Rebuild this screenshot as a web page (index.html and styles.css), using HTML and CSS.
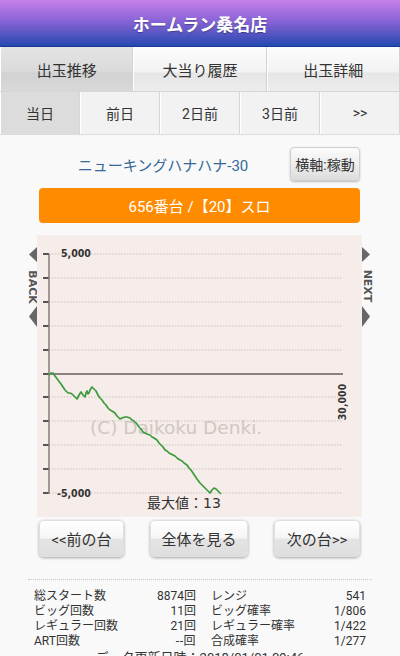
FILE: index.html
```html
<!DOCTYPE html>
<html lang="ja">
<head>
<meta charset="utf-8">
<title>ホームラン桑名店</title>
<link rel="stylesheet" href="styles.css">
</head>
<body>
<header class="hdr">ホームラン桑名店</header>
<nav class="tabs">
  <div class="tab active">出玉推移</div>
  <div class="tab">大当り履歴</div>
  <div class="tab">出玉詳細</div>
</nav>
<nav class="days">
  <div class="day active">当日</div>
  <div class="day">前日</div>
  <div class="day">2日前</div>
  <div class="day">3日前</div>
  <div class="day">&gt;&gt;</div>
</nav>
<div class="title-row">
  <span class="name">ニューキングハナハナ-30</span>
  <button class="axis-btn">横軸:稼動</button>
</div>
<div class="unit-bar">656番台 /【20】スロ</div>
<div class="chart-row">
  <div class="side">
    <svg width="12" height="100" viewBox="0 0 12 100" overflow="visible">
      <polygon points="4,19.5 12,12 12,27" fill="#666"/>
      <polygon points="4,81.5 12,71 12,92" fill="#666"/>
      <text x="7" y="52" class="side-txt" transform="rotate(90 7 52)">BACK</text>
    </svg>
  </div>
  <div class="chart">
    <svg width="325" height="282" viewBox="0 0 325 282">
      <g class="grid">
        <line x1="12" y1="19" x2="306" y2="19"/>
        <line x1="12" y1="43" x2="306" y2="43"/>
        <line x1="12" y1="67" x2="306" y2="67"/>
        <line x1="12" y1="91" x2="306" y2="91"/>
        <line x1="12" y1="115" x2="306" y2="115"/>
        <line x1="12" y1="162" x2="306" y2="162"/>
        <line x1="12" y1="186" x2="306" y2="186"/>
        <line x1="12" y1="210" x2="306" y2="210"/>
        <line x1="12" y1="234" x2="306" y2="234"/>
        <line x1="12" y1="258" x2="306" y2="258"/>
      </g>
      <g class="ticks">
        <line x1="6" y1="19" x2="12" y2="19"/>
        <line x1="6" y1="43" x2="12" y2="43"/>
        <line x1="6" y1="67" x2="12" y2="67"/>
        <line x1="6" y1="91" x2="12" y2="91"/>
        <line x1="6" y1="115" x2="12" y2="115"/>
        <line x1="6" y1="139" x2="12" y2="139"/>
        <line x1="6" y1="162" x2="12" y2="162"/>
        <line x1="6" y1="186" x2="12" y2="186"/>
        <line x1="6" y1="210" x2="12" y2="210"/>
        <line x1="6" y1="234" x2="12" y2="234"/>
        <line x1="6" y1="258" x2="12" y2="258"/>
      </g>
      <line class="axis" x1="12" y1="19" x2="12" y2="259"/>
      <line class="zero" x1="12" y1="139" x2="306" y2="139"/>
      <text class="wm" x="53" y="199">(C) Daikoku Denki.</text>
      <text class="ylab" x="24" y="22">5,000</text>
      <text class="ylab" x="20" y="262">-5,000</text>
      <text class="ylab" x="309" y="167" text-anchor="middle" transform="rotate(-90 309 167)">30,000</text>
      <polyline class="data" points="12,140 14,138 16,138 18,141 21,145 24,149 26,152 28,155 31,158 33,158 35,159 37,161 40,164 42,160 44,157 46,160 48,162 49,158 50,156 51,159 52,158 53,155 55,152 57,154 59,156 61,160 63,163 65,165 67,168 69,170 71,173 73,175 75,176 78,178 80,181 83,184 85,183 88,182 90,182 93,183 95,185 97,186 100,189 102,192 104,194 106,197 108,198 110,199 113,200 115,202 117,203 120,205 122,208 124,210 126,212 128,215 130,216 132,218 134,219 136,220 138,221 140,223 143,225 145,226 147,228 150,230 152,233 154,235 156,238 158,241 160,244 163,248 165,250 167,252 169,254 171,256 173,258 175,255 177,253 179,254 180,255 182,257 184,259"/>
      <text class="maxv" x="110" y="273">最大値：13</text>
    </svg>
  </div>
  <div class="side">
    <svg width="12" height="100" viewBox="0 0 12 100" overflow="visible">
      <polygon points="0,12 8,19.5 0,27" fill="#666"/>
      <polygon points="0,71 8,81.5 0,92" fill="#666"/>
      <text x="5" y="51" class="side-txt" transform="rotate(90 5 51)">NEXT</text>
    </svg>
  </div>
</div>
<div class="nav-btns">
  <button class="nbtn prev">&lt;&lt;前の台</button>
  <button class="nbtn all">全体を見る</button>
  <button class="nbtn next">次の台&gt;&gt;</button>
</div>
<section class="stats">
  <div class="stats-grid">
    <div class="cell"><span>総スタート数</span><span>8874回</span></div>
    <div class="cell"><span>レンジ</span><span>541</span></div>
    <div class="cell"><span>ビッグ回数</span><span>11回</span></div>
    <div class="cell"><span>ビッグ確率</span><span>1/806</span></div>
    <div class="cell"><span>レギュラー回数</span><span>21回</span></div>
    <div class="cell"><span>レギュラー確率</span><span>1/422</span></div>
    <div class="cell"><span>ART回数</span><span class="dash">--回</span></div>
    <div class="cell"><span>合成確率</span><span>1/277</span></div>
  </div>
  <div class="updated">データ更新日時：2018/01/01 09:46</div>
</section>
</body>
</html>
```
FILE: styles.css
```css
* { box-sizing: border-box; }
html, body { margin: 0; padding: 0; }
body {
  background: #f9f9f9;
  font-family: "Roboto", "Noto Sans CJK JP", sans-serif;
  color: #333;
  width: 400px;
  overflow: hidden;
}
.hdr {
  height: 47px;
  background: linear-gradient(#c681ea 0%, #8a63d6 45%, #2549b1 100%);
  border-bottom: 1px solid #163c92;
  color: #fff;
  font-weight: bold;
  font-size: 17px;
  display: flex;
  align-items: center;
  justify-content: center;
  text-shadow: 0 1px 1px rgba(0,0,0,0.3);
}
.tabs {
  display: flex;
  height: 45px;
  border-bottom: 1px solid #d6d6d6;
}
.tab {
  flex: 1;
  display: flex;
  align-items: center;
  justify-content: center;
  font-size: 15px;
  color: #333;
  background: linear-gradient(#fcfcfc 0%, #f3f3f3 55%, #e6e6e6 60%, #ececec 100%);
  border-left: 1px solid #fff;
  border-right: 1px solid #d2d2d2;
}
.tab.active {
  background: linear-gradient(#e4e4e4 0%, #dadada 55%, #d2d2d2 60%, #d8d8d8 100%);
}
.days {
  display: flex;
  height: 43px;
  border-bottom: 1px solid #dcdcdc;
}
.day {
  flex: 1;
  display: flex;
  align-items: center;
  justify-content: center;
  font-size: 14px;
  background: #f2f2f2;
  border-left: 1px solid #fff;
  border-right: 1px solid #d6d6d6;
}
.day.active { background: #dcdcdc; }
.title-row {
  display: flex;
  align-items: center;
  margin-top: 12px;
  padding: 0 40px 0 36px;
  height: 34px;
}
.name {
  flex: 1;
  text-align: center;
  color: #36689a;
  font-size: 15px;
}
.axis-btn {
  width: 70px;
  height: 34px;
  padding: 0;
  font-family: inherit;
  font-size: 14px;
  color: #333;
  border: 1px solid #cfcfcf;
  border-radius: 4px;
  background: linear-gradient(#fbfbfb 0%, #eeeeee 50%, #dcdcdc 100%);
  box-shadow: 0 1px 2px rgba(0,0,0,0.25);
}
.unit-bar {
  margin: 7px 40px 0 39px;
  height: 35px;
  border-radius: 4px;
  background: #ff8c00;
  color: #fff;
  font-size: 15px;
  display: flex;
  align-items: center;
  justify-content: center;
}
.chart-row {
  display: flex;
  margin-top: 12px;
  padding-left: 25px;
}
.side { width: 12px; }
.side svg { display: block; overflow: visible; }
.side-txt {
  font-family: "DejaVu Sans", sans-serif;
  font-size: 11px;
  font-weight: bold;
  fill: #555;
  text-anchor: middle;
  dominant-baseline: central;
}
.chart {
  width: 325px;
  height: 282px;
  background: #f6ece9;
}
.chart svg { display: block; }
.grid line {
  stroke: #cbc1bd;
  stroke-width: 1;
  stroke-dasharray: 1.5 1.5;
}
.ticks line { stroke: #5a5352; stroke-width: 2; }
.axis { stroke: #857b79; stroke-width: 1.5; }
.zero { stroke: #8a807e; stroke-width: 2; }
.wm {
  font-family: "DejaVu Sans", sans-serif;
  font-size: 18.5px;
  fill: #d0c7c3;
}
.ylab {
  font-family: "DejaVu Sans Condensed", "DejaVu Sans", sans-serif;
  font-size: 10.5px;
  font-weight: bold;
  fill: #333;
}
.data {
  fill: none;
  stroke: #3c9b3c;
  stroke-width: 1.7;
  stroke-linejoin: round;
}
.maxv {
  font-family: "DejaVu Sans", "Noto Sans CJK JP", sans-serif;
  font-size: 14px;
  fill: #333;
}
.nav-btns {
  display: flex;
  margin-top: 3px;
  padding: 0 40px 0 39px;
  justify-content: space-between;
}
.nbtn {
  height: 37px;
  padding: 0;
  font-family: inherit;
  font-size: 15px;
  color: #333;
  border: 1px solid #e0e0e0;
  border-radius: 5px;
  background: linear-gradient(#ffffff 0%, #f6f6f6 48%, #e4e4e4 52%, #dedede 100%);
  box-shadow: 0 1px 3px rgba(0,0,0,0.35);
}
.nbtn.prev { width: 85px; }
.nbtn.all { width: 98px; }
.nbtn.next { width: 86px; }
.stats {
  margin: 22px 28px 0 28px;
  border-top: 1px dotted #c8c8c8;
  padding-top: 9px;
}
.stats-grid {
  display: grid;
  grid-template-columns: 162px 155px;
  column-gap: 15px;
  margin-left: 6px;
  font-size: 12px;
  line-height: 15px;
}
.cell {
  display: flex;
  justify-content: space-between;
}
.dash { letter-spacing: 0.5px; }
.updated {
  text-align: center;
  font-size: 13px;
  line-height: 15px;
  margin-top: 1px;
}
```
